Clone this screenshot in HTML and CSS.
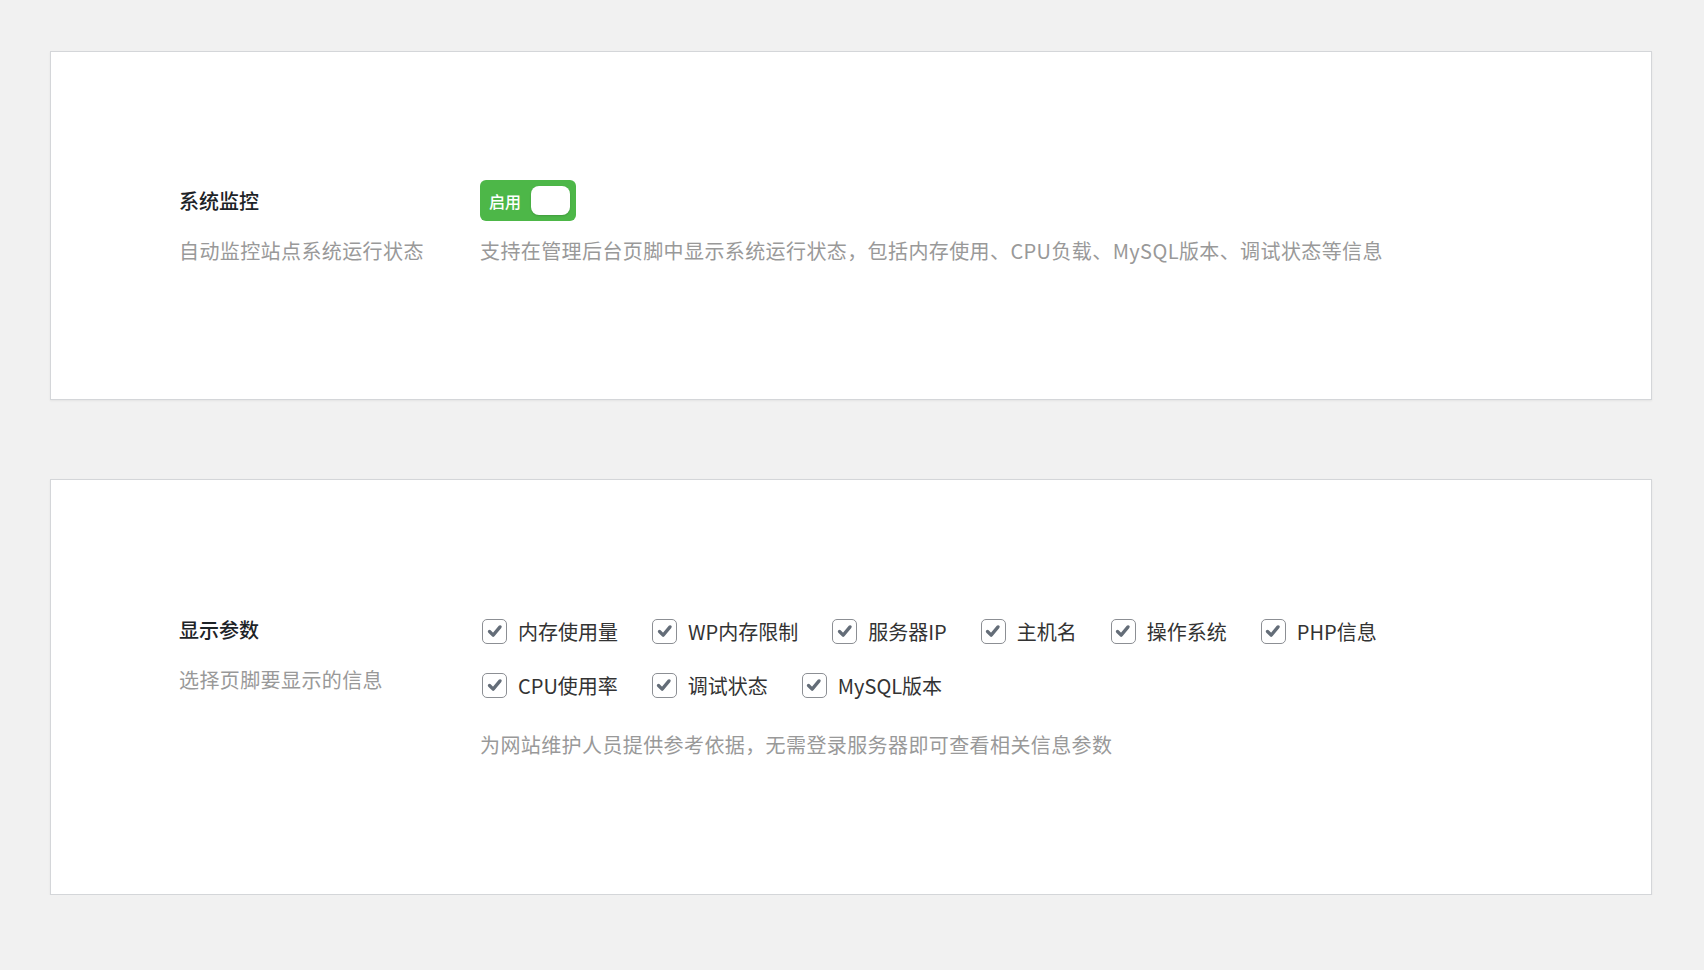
FILE: index.html
```html
<!DOCTYPE html>
<html lang="zh-CN">
<head>
    <meta charset="UTF-8">
    <meta name="viewport" content="width=device-width, initial-scale=1.0">
    <title>系统监控设置</title>
    <link rel="stylesheet" href="styles.css">
</head>
<body>
    <div class="wrap">
        <div class="card card-monitor">
            <div class="row">
                <div class="side">
                    <div class="title">系统监控</div>
                    <div class="desc">自动监控站点系统运行状态</div>
                </div>
                <div class="main">
                    <label class="switch">
                        <span class="switch-text">启用</span>
                        <span class="switch-knob"></span>
                    </label>
                    <div class="desc desc-main">支持在管理后台页脚中显示系统运行状态，包括内存使用、CPU负载、MySQL版本、调试状态等信息</div>
                </div>
            </div>
        </div>

        <div class="card card-params">
            <div class="row">
                <div class="side">
                    <div class="title">显示参数</div>
                    <div class="desc">选择页脚要显示的信息</div>
                </div>
                <div class="main">
                    <div class="checks">
                        <label class="check"><span class="box"><svg viewBox="0 0 24 24"><path d="M6 12.5l4 4 7.5-9"/></svg></span>内存使用量</label>
                        <label class="check"><span class="box"><svg viewBox="0 0 24 24"><path d="M6 12.5l4 4 7.5-9"/></svg></span>WP内存限制</label>
                        <label class="check"><span class="box"><svg viewBox="0 0 24 24"><path d="M6 12.5l4 4 7.5-9"/></svg></span>服务器IP</label>
                        <label class="check"><span class="box"><svg viewBox="0 0 24 24"><path d="M6 12.5l4 4 7.5-9"/></svg></span>主机名</label>
                        <label class="check"><span class="box"><svg viewBox="0 0 24 24"><path d="M6 12.5l4 4 7.5-9"/></svg></span>操作系统</label>
                        <label class="check"><span class="box"><svg viewBox="0 0 24 24"><path d="M6 12.5l4 4 7.5-9"/></svg></span>PHP信息</label>
                    </div>
                    <div class="checks">
                        <label class="check"><span class="box"><svg viewBox="0 0 24 24"><path d="M6 12.5l4 4 7.5-9"/></svg></span>CPU使用率</label>
                        <label class="check"><span class="box"><svg viewBox="0 0 24 24"><path d="M6 12.5l4 4 7.5-9"/></svg></span>调试状态</label>
                        <label class="check"><span class="box"><svg viewBox="0 0 24 24"><path d="M6 12.5l4 4 7.5-9"/></svg></span>MySQL版本</label>
                    </div>
                    <div class="desc desc-help">为网站维护人员提供参考依据，无需登录服务器即可查看相关信息参数</div>
                </div>
            </div>
        </div>
    </div>
</body>
</html>
```

FILE: styles.css
```css
* {
    margin: 0;
    padding: 0;
    box-sizing: border-box;
}

body {
    font-family: "Noto Sans CJK SC", "Noto Sans", sans-serif;
    background: #f1f1f1;
    color: #1d2327;
    font-size: 20px;
}

.wrap {
    padding: 51px 52px 0 50px;
}

.card {
    background: #ffffff;
    border: 1px solid #d4d6d9;
    box-shadow: 0 1px 2px rgba(0, 0, 0, 0.06);
}

.card-monitor {
    padding: 128px 128px 133px;
}

.card-params {
    margin-top: 79px;
    padding: 129px 128px 134px;
}

.row {
    display: flex;
}

.side {
    width: 301px;
    flex-shrink: 0;
}

.title {
    height: 41px;
    line-height: 41px;
    font-weight: 500;
    color: #1d2327;
}

.desc {
    margin-top: 15px;
    line-height: 30px;
    color: #999999;
    letter-spacing: 0.4px;
}

/* 开关 */
.switch {
    display: flex;
    align-items: center;
    justify-content: space-between;
    width: 96px;
    height: 41px;
    padding: 0 6px 0 9px;
    background: #4db748;
    border-radius: 6px;
    cursor: pointer;
}

.switch-text {
    color: #ffffff;
    font-size: 16px;
    font-weight: 500;
}

.switch-knob {
    width: 39px;
    height: 29px;
    background: #ffffff;
    border-radius: 8px;
    box-shadow: 0 1px 2px rgba(0, 0, 0, 0.15);
}

/* 复选框 */
.checks {
    display: flex;
    align-items: center;
    height: 44px;
}

.checks + .checks {
    margin-top: 10px;
}

.check {
    display: flex;
    align-items: center;
    margin-right: 32px;
    color: #333333;
    cursor: pointer;
}

.box {
    width: 25px;
    height: 25px;
    margin: 0 11px 0 2px;
    border: 1.5px solid #8c8f94;
    border-radius: 5px;
    display: flex;
    align-items: center;
    justify-content: center;
}

.box svg {
    width: 22px;
    height: 22px;
    fill: none;
    stroke: #646d78;
    stroke-width: 3.6;
    stroke-linecap: round;
    stroke-linejoin: round;
}

.desc-help {
    margin-top: 23px;
}
```
